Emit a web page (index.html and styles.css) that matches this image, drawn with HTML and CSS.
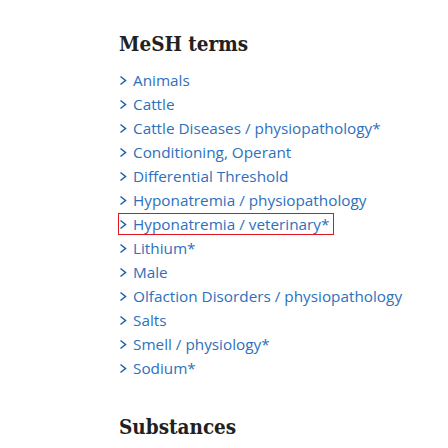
FILE: index.html
```html
<!DOCTYPE html>
<html>
<head>
<meta charset="utf-8">
<link rel="stylesheet" href="styles.css">
</head>
<body>
<div class="page">
  <section class="mesh">
    <h2 class="title">MeSH terms</h2>
    <ul class="terms">
      <li class="term"><span class="row"><svg class="chev" viewBox="0 0 8 11" width="8" height="11"><polyline points="1.5,1.5 6.5,5.5 1.5,9.5"/></svg><a class="link">Animals</a></span></li>
      <li class="term"><span class="row"><svg class="chev" viewBox="0 0 8 11" width="8" height="11"><polyline points="1.5,1.5 6.5,5.5 1.5,9.5"/></svg><a class="link">Cattle</a></span></li>
      <li class="term"><span class="row"><svg class="chev" viewBox="0 0 8 11" width="8" height="11"><polyline points="1.5,1.5 6.5,5.5 1.5,9.5"/></svg><a class="link">Cattle Diseases / physiopathology*</a></span></li>
      <li class="term"><span class="row"><svg class="chev" viewBox="0 0 8 11" width="8" height="11"><polyline points="1.5,1.5 6.5,5.5 1.5,9.5"/></svg><a class="link">Conditioning, Operant</a></span></li>
      <li class="term"><span class="row"><svg class="chev" viewBox="0 0 8 11" width="8" height="11"><polyline points="1.5,1.5 6.5,5.5 1.5,9.5"/></svg><a class="link">Differential Threshold</a></span></li>
      <li class="term"><span class="row"><svg class="chev" viewBox="0 0 8 11" width="8" height="11"><polyline points="1.5,1.5 6.5,5.5 1.5,9.5"/></svg><a class="link">Hyponatremia / physiopathology</a></span></li>
      <li class="term"><span class="row selected"><svg class="chev" viewBox="0 0 8 11" width="8" height="11"><polyline points="1.5,1.5 6.5,5.5 1.5,9.5"/></svg><a class="link">Hyponatremia / veterinary*</a></span></li>
      <li class="term"><span class="row"><svg class="chev" viewBox="0 0 8 11" width="8" height="11"><polyline points="1.5,1.5 6.5,5.5 1.5,9.5"/></svg><a class="link">Lithium*</a></span></li>
      <li class="term"><span class="row"><svg class="chev" viewBox="0 0 8 11" width="8" height="11"><polyline points="1.5,1.5 6.5,5.5 1.5,9.5"/></svg><a class="link">Male</a></span></li>
      <li class="term"><span class="row"><svg class="chev" viewBox="0 0 8 11" width="8" height="11"><polyline points="1.5,1.5 6.5,5.5 1.5,9.5"/></svg><a class="link">Olfaction Disorders / physiopathology</a></span></li>
      <li class="term"><span class="row"><svg class="chev" viewBox="0 0 8 11" width="8" height="11"><polyline points="1.5,1.5 6.5,5.5 1.5,9.5"/></svg><a class="link">Salts</a></span></li>
      <li class="term"><span class="row"><svg class="chev" viewBox="0 0 8 11" width="8" height="11"><polyline points="1.5,1.5 6.5,5.5 1.5,9.5"/></svg><a class="link">Smell / physiology*</a></span></li>
      <li class="term"><span class="row"><svg class="chev" viewBox="0 0 8 11" width="8" height="11"><polyline points="1.5,1.5 6.5,5.5 1.5,9.5"/></svg><a class="link">Sodium*</a></span></li>
    </ul>
  </section>
  <section class="subst">
    <h2 class="title">Substances</h2>
  </section>
</div>
</body>
</html>
```
FILE: styles.css
```css
html, body { margin: 0; padding: 0; background: #fff; }
.page { padding: 28px 0 0 118px; }
.title {
  margin: 0 0 0 1px;
  font-family: "DejaVu Serif Condensed", "DejaVu Serif", serif;
  font-stretch: condensed;
  font-weight: bold;
  font-size: 20.5px;
  line-height: 32px;
  color: #212121;
}
.terms { list-style: none; margin: 8px 0 0; padding: 0; }
.term {
  display: flex;
  align-items: center;
  height: 24px;
}
.row {
  display: inline-flex;
  align-items: center;
  height: 22px;
  box-sizing: border-box;
  padding: 0 4px 0 0;
  border: 1px solid transparent;
  font-family: "Open Sans", sans-serif;
  font-size: 15.3px;
  color: #2d70bd;
}
.row.selected { border-color: #e0141e; }
.chev {
  display: block;
  margin: 0 6px 0 0;
  fill: none;
  stroke: #1f5ea8;
  stroke-width: 1.5;
}
.link { color: #2d70bd; }
.subst { margin-top: 31px; }
```
